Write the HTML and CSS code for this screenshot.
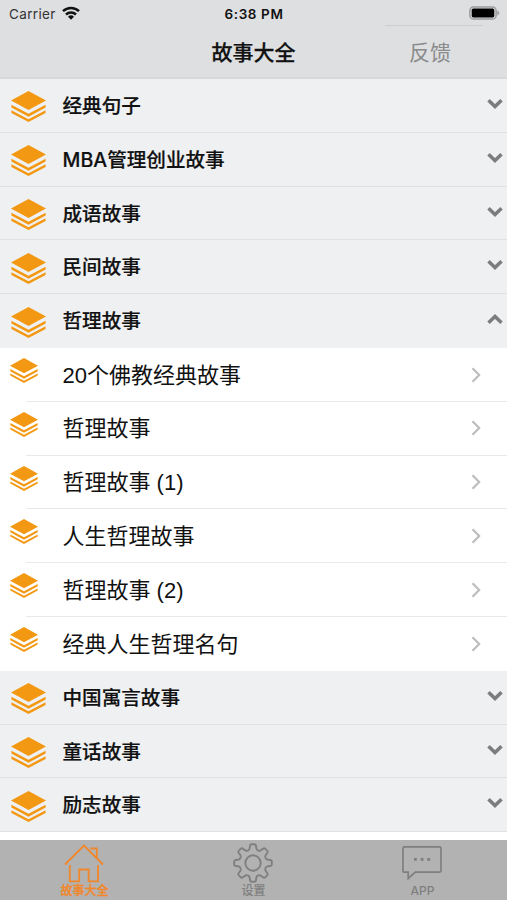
FILE: index.html
```html
<!DOCTYPE html>
<html lang="zh-CN">
<head>
<meta charset="utf-8">
<title>故事大全</title>
<link rel="stylesheet" href="styles.css">
</head>
<body>
<svg class="defs" aria-hidden="true">
  <symbol id="layers" viewBox="0 0 35 31">
    <path d="M17.5 0 35 9.5 17.5 19 0 9.5Z"/>
    <path d="M.4 13.700v2.700l17.100 9.300 17.100-9.300v-2.700l-17.100 9Z"/>
    <path d="M.4 19.200v2.700l17.100 9.100 17.100-9.100v-2.700l-17.100 9Z"/>
  </symbol>
  <symbol id="down" viewBox="0 0 16 12">
    <path d="M1.500 2.200 8 8.600l6.500-6.400" fill="none" stroke="currentColor" stroke-width="3.500"/>
  </symbol>
  <symbol id="right" viewBox="0 0 10 16">
    <path d="m1.500 1.300 6.700 6.700-6.700 6.700" fill="none" stroke="currentColor" stroke-width="2.100"/>
  </symbol>
  <symbol id="tooth" viewBox="0 0 40 40">
    <path d="M14.830 7.530Q16.600 6.800 16.700 5L17 2.800Q17.200 1.200 18.600 1.200H21.400Q22.800 1.200 23 2.800L23.300 5Q23.400 6.800 25.170 7.530" fill="none" stroke="currentColor" stroke-width="1.900"/>
  </symbol>
</svg>
<div class="app">
  <header class="top">
    <div class="status">
      <span class="carrier">Carrier
        <svg class="wifi" viewBox="0 0 18 14"><g fill="none" stroke="#111" stroke-width="2.5"><path d="M1 5.2a11.5 11.5 0 0 1 16 0"/><path d="M4 8.5a7.2 7.2 0 0 1 10 0"/></g><path d="M6 10.8a4.3 4.3 0 0 1 6 0l-3 3Z" fill="#111"/></svg>
      </span>
      <span class="time">6:38 PM</span>
      <svg class="battery" viewBox="0 0 31 14"><rect x=".9" y=".9" width="26.2" height="12.2" rx="3.6" fill="none" stroke="#9b9c9d" stroke-width="1.5"/><rect x="2.7" y="2.6" width="22.6" height="8.8" rx="1.6"/><path d="M28.3 4.6c2.6.8 2.6 4 0 4.8Z" fill="#9b9c9d"/></svg>
    </div>
    <nav class="navbar">
      <h1>故事大全</h1>
      <a class="feedback">反馈</a>
    </nav>
  </header>
  <main class="list">
    <div class="group"><svg class="icon"><use href="#layers"/></svg><span>经典句子</span><svg class="chev"><use href="#down"/></svg></div>
    <div class="group"><svg class="icon"><use href="#layers"/></svg><span>MBA管理创业故事</span><svg class="chev"><use href="#down"/></svg></div>
    <div class="group"><svg class="icon"><use href="#layers"/></svg><span>成语故事</span><svg class="chev"><use href="#down"/></svg></div>
    <div class="group"><svg class="icon"><use href="#layers"/></svg><span>民间故事</span><svg class="chev"><use href="#down"/></svg></div>
    <div class="group open"><svg class="icon"><use href="#layers"/></svg><span>哲理故事</span><svg class="chev"><use href="#down"/></svg></div>
    <div class="item"><svg class="icon"><use href="#layers"/></svg><div class="body"><span>20个佛教经典故事</span><svg class="arrow"><use href="#right"/></svg></div></div>
    <div class="item"><svg class="icon"><use href="#layers"/></svg><div class="body"><span>哲理故事</span><svg class="arrow"><use href="#right"/></svg></div></div>
    <div class="item"><svg class="icon"><use href="#layers"/></svg><div class="body"><span>哲理故事 (1)</span><svg class="arrow"><use href="#right"/></svg></div></div>
    <div class="item"><svg class="icon"><use href="#layers"/></svg><div class="body"><span>人生哲理故事</span><svg class="arrow"><use href="#right"/></svg></div></div>
    <div class="item"><svg class="icon"><use href="#layers"/></svg><div class="body"><span>哲理故事 (2)</span><svg class="arrow"><use href="#right"/></svg></div></div>
    <div class="item last"><svg class="icon"><use href="#layers"/></svg><div class="body"><span>经典人生哲理名句</span><svg class="arrow"><use href="#right"/></svg></div></div>
    <div class="group"><svg class="icon"><use href="#layers"/></svg><span>中国寓言故事</span><svg class="chev"><use href="#down"/></svg></div>
    <div class="group"><svg class="icon"><use href="#layers"/></svg><span>童话故事</span><svg class="chev"><use href="#down"/></svg></div>
    <div class="group"><svg class="icon"><use href="#layers"/></svg><span>励志故事</span><svg class="chev"><use href="#down"/></svg></div>
  </main>
  <footer class="tabs">
    <a class="tab active">
      <svg viewBox="0 0 40 40"><path d="M1 21.5 20 2.5l19 19M26.5 5.5h6.300v9.300M5.800 22v16.300h9.400V26.500h9.400v11.800H34V22" fill="none" stroke="currentColor" stroke-width="1.800"/></svg>
      <span>故事大全</span>
    </a>
    <a class="tab">
      <svg viewBox="0 0 40 40">
        <circle cx="20" cy="20" r="7.700" fill="none" stroke="currentColor" stroke-width="1.900"/>
        <use href="#tooth" width="40" height="40"/>
        <use href="#tooth" width="40" height="40" transform="rotate(45 20 20)"/>
        <use href="#tooth" width="40" height="40" transform="rotate(90 20 20)"/>
        <use href="#tooth" width="40" height="40" transform="rotate(135 20 20)"/>
        <use href="#tooth" width="40" height="40" transform="rotate(180 20 20)"/>
        <use href="#tooth" width="40" height="40" transform="rotate(225 20 20)"/>
        <use href="#tooth" width="40" height="40" transform="rotate(270 20 20)"/>
        <use href="#tooth" width="40" height="40" transform="rotate(315 20 20)"/>
      </svg>
      <span>设置</span>
    </a>
    <a class="tab">
      <svg viewBox="0 0 40 40"><path d="M2.300 3.900h35.400q1.300 0 1.300 1.300v22.600q0 1.300-1.300 1.300H13.300L6.200 35.500v-6.400H2.300Q1 29.100 1 27.800V5.200Q1 3.900 2.300 3.900Z" fill="none" stroke="currentColor" stroke-width="1.700"/><path d="M12 15h2.800v2.800H12Zm6.700 0h2.800v2.800h-2.800Zm6.600 0h2.800v2.800h-2.800Z" fill="currentColor"/></svg>
      <span>APP</span>
    </a>
  </footer>
</div>
</body>
</html>
```
FILE: styles.css
```css
* { box-sizing: border-box; }
body {
  margin: 0;
  background: #fff;
  color: #111;
  font-family: Inter, "Noto Sans CJK SC", sans-serif;
}
.defs { position: absolute; width: 0; height: 0; }
.app {
  width: 507px;
  height: 900px;
  display: flex;
  flex-direction: column;
  overflow: hidden;
}
.top {
  height: 79px;
  flex: none;
  background: #dedfe1;
  border-bottom: 2px solid #d8d9da;
}
.status {
  height: 26px;
  display: grid;
  grid-template-columns: 1fr auto 1fr;
  align-items: center;
  padding: 2px 7px 0 9px;
  font-size: 13.5px;
}
.carrier { display: flex; align-items: center; gap: 6px; color: #333; letter-spacing: .35px; }
.wifi { width: 18px; height: 14px; margin-top: -3px; }
.time { font-weight: 600; letter-spacing: .6px; margin-left: -1px; }
.battery { width: 31px; height: 14px; justify-self: end; margin-top: -2px; }
.navbar {
  height: 51px;
  display: grid;
  grid-template-columns: 1fr auto 1fr;
  align-items: start;
}
.time, .carrier { line-height: 24px; }
h1 {
  grid-column: 2;
  margin: 0;
  font-size: 21px;
  line-height: 53px;
  font-weight: 500;
  -webkit-text-stroke: .25px #111;
}
.feedback {
  justify-self: start;
  width: 98px;
  margin: -1px 0 0 89px;
  border-top: 1px solid #cdcecf;
  color: #8a8b8c;
  font-size: 21px;
  line-height: 53px;
  padding-left: 24.5px;
}
.list { flex: 1; }
.group, .item { height: 53.8px; display: flex; }
.group {
  background: #eff0f2;
  border-bottom: 1.5px solid #dfe0e2;
  padding: 0 4px 0 11px;
  font-size: 19.6px;
  line-height: 55px;
  font-weight: 500;
  -webkit-text-stroke: .2px #111;
}
.group.open { border-bottom-color: #eff0f2; }
.icon { fill: #f39812; flex: none; }
.group .icon { width: 35px; height: 31px; margin: 12.4px 16.5px 0 0; }
.chev { width: 16px; height: 12px; margin: 19px 0 0 auto; color: #7b7c7e; }
.open .chev { transform: rotate(180deg); }
.item .icon { width: 28px; height: 25px; margin: 10px -11.5px 0 9.5px; position: relative; }
.body {
  flex: 1;
  display: flex;
  align-items: center;
  border-bottom: 1.5px solid #e9e9eb;
  padding: 1.4px 26.5px 0 36.5px;
  font-family: "Liberation Sans", "Noto Sans CJK SC", sans-serif;
  font-size: 22px;
  line-height: 51px;
}
.last .body { border-bottom-color: #fff; }
.arrow { width: 10px; height: 16px; margin: -1px 0 0 auto; color: #bcbcbe; }
.tabs {
  height: 60.5px;
  flex: none;
  display: flex;
  background: #b2b2b2;
  color: #7f7f7f;
}
.tab {
  flex: 1;
  display: flex;
  flex-direction: column;
  align-items: center;
  padding-top: 3.5px;
  font-size: 12px;
  line-height: 15px;
  font-weight: 500;
}
.tab svg { width: 40px; height: 40px; margin-right: 1px; }
.tab.active { color: #f1872b; }
.tab.active span { -webkit-text-stroke: .3px #f1872b; }
```
